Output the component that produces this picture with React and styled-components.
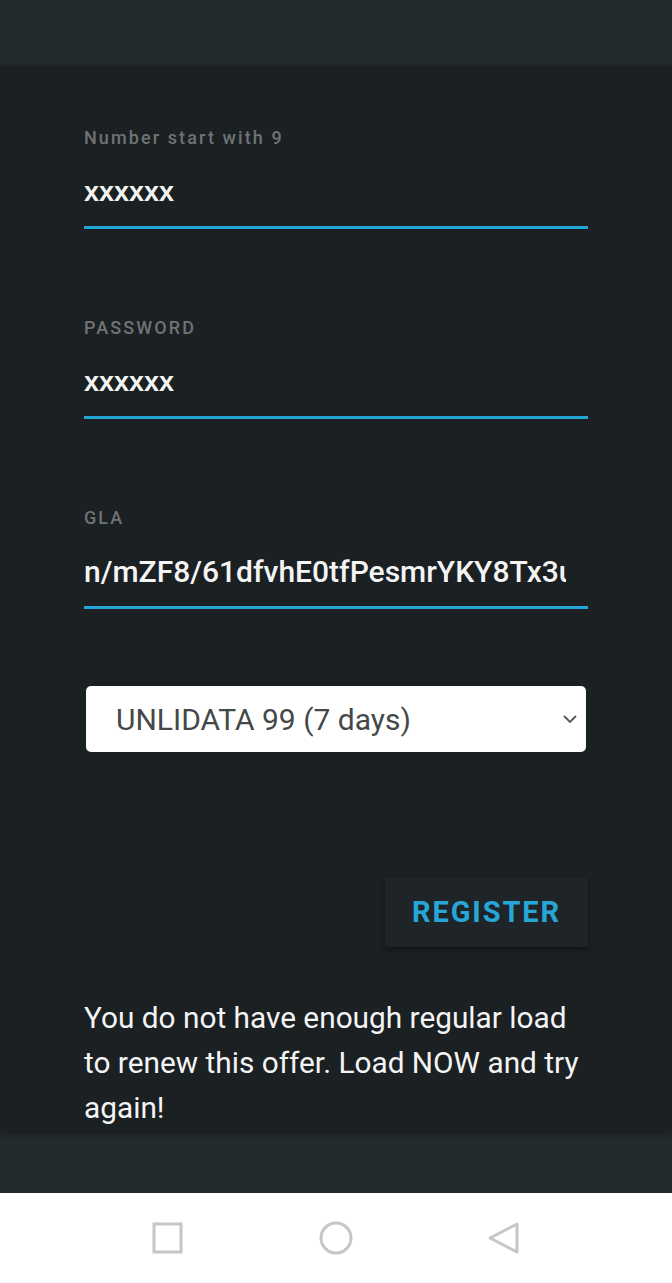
import React from 'react';
import styled, { createGlobalStyle } from 'styled-components';

const GlobalStyle = createGlobalStyle`
  html, body {
    margin: 0;
    padding: 0;
    background: #242b2e;
    font-family: Roboto, "Liberation Sans", sans-serif;
  }
`;

const Screen = styled.div`
  width: 672px;
  height: 1283px;
  display: flex;
  flex-direction: column;
  background: #242b2e;
  overflow: hidden;
`;

const TopBar = styled.div`
  height: 66px;
  flex-shrink: 0;
  background: #232a2d;
`;

const Card = styled.div`
  background: #1b2023;
  padding: 62px 84px 2px 84px;
  display: flex;
  flex-direction: column;
  box-shadow: 0 2px 6px rgba(0, 0, 0, 0.35);
  position: relative;
`;

const Field = styled.div`
  display: flex;
  flex-direction: column;
  margin-bottom: ${(props) => props.gap}px;
`;

const Label = styled.div`
  font-size: 18px;
  line-height: 20px;
  font-weight: 500;
  letter-spacing: 2.1px;
  color: #6f7375;
  margin-bottom: 28px;
`;

const Value = styled.div`
  font-family: ${(props) => (props.masked ? '"Liberation Sans", Arial, sans-serif' : 'Roboto, "Liberation Sans", sans-serif')};
  font-size: ${(props) => (props.masked ? 27 : 30)}px;
  line-height: 32px;
  font-weight: ${(props) => (props.masked ? 700 : 500)};
  color: #f4f4f4;
  white-space: nowrap;
  overflow: hidden;
  margin-right: 22px;
  margin-bottom: 18px;
`;

const Underline = styled.div`
  height: 3px;
  background: #23a6d5;
`;

const Select = styled.div`
  margin: 0 2px 0 2px;
  height: 66px;
  border-radius: 5px;
  background: #ffffff;
  display: flex;
  align-items: center;
  justify-content: space-between;
  padding: 0 6px 0 30px;
  box-sizing: border-box;
  font-size: 30px;
  color: #444849;
  margin-bottom: 125px;
`;

const ButtonRow = styled.div`
  display: flex;
  justify-content: flex-end;
  margin-bottom: 48px;
`;

const RegisterButton = styled.button`
  width: 203px;
  height: 70px;
  border: none;
  border-radius: 3px;
  background: #1e2427;
  box-shadow: 0 3px 5px rgba(0, 0, 0, 0.35);
  color: #27a7d7;
  font-family: Roboto, "Liberation Sans", sans-serif;
  font-size: 29px;
  font-weight: 700;
  letter-spacing: 1.9px;
  padding: 0;
`;

const Message = styled.p`
  margin: 0;
  font-size: 29.8px;
  line-height: 45px;
  color: #f4f4f4;
`;

const Spacer = styled.div`
  flex: 1;
  background: #242b2f;
`;

const NavBar = styled.div`
  height: 90px;
  flex-shrink: 0;
  background: #ffffff;
  display: flex;
  align-items: center;
  justify-content: center;
`;

const NavSlot = styled.div`
  width: 168px;
  display: flex;
  justify-content: center;
`;

function Chevron() {
  return (
    <svg width="20" height="20" viewBox="0 0 20 20">
      <path d="M4 7 L10 13 L16 7" fill="none" stroke="#555" strokeWidth="1.8" />
    </svg>
  );
}

function App() {
  return (
    <Screen>
      <GlobalStyle />
      <TopBar />
      <Card>
        <Field gap={89}>
          <Label>Number start with 9</Label>
          <Value masked>xxxxxx</Value>
          <Underline />
        </Field>
        <Field gap={89}>
          <Label>PASSWORD</Label>
          <Value masked>xxxxxx</Value>
          <Underline />
        </Field>
        <Field gap={77}>
          <Label>GLA</Label>
          <Value>n/mZF8/61dfvhE0tfPesmrYKY8Tx3u</Value>
          <Underline />
        </Field>
        <Select>
          <span>UNLIDATA 99 (7 days)</span>
          <Chevron />
        </Select>
        <ButtonRow>
          <RegisterButton>REGISTER</RegisterButton>
        </ButtonRow>
        <Message>
          You do not have enough regular load to renew this offer. Load NOW and try again!
        </Message>
      </Card>
      <Spacer />
      <NavBar>
        <NavSlot>
          <svg width="34" height="34" viewBox="0 0 34 34">
            <rect x="3" y="3" width="27" height="28" fill="none" stroke="#c6c6c6" strokeWidth="3" />
          </svg>
        </NavSlot>
        <NavSlot>
          <svg width="36" height="36" viewBox="0 0 36 36">
            <circle cx="18" cy="18" r="15" fill="none" stroke="#c6c6c6" strokeWidth="3" />
          </svg>
        </NavSlot>
        <NavSlot>
          <svg width="34" height="34" viewBox="0 0 34 34">
            <path d="M30 3 L3 17 L30 31 Z" fill="none" stroke="#c6c6c6" strokeWidth="3" strokeLinejoin="round" />
          </svg>
        </NavSlot>
      </NavBar>
    </Screen>
  );
}

export default App;
